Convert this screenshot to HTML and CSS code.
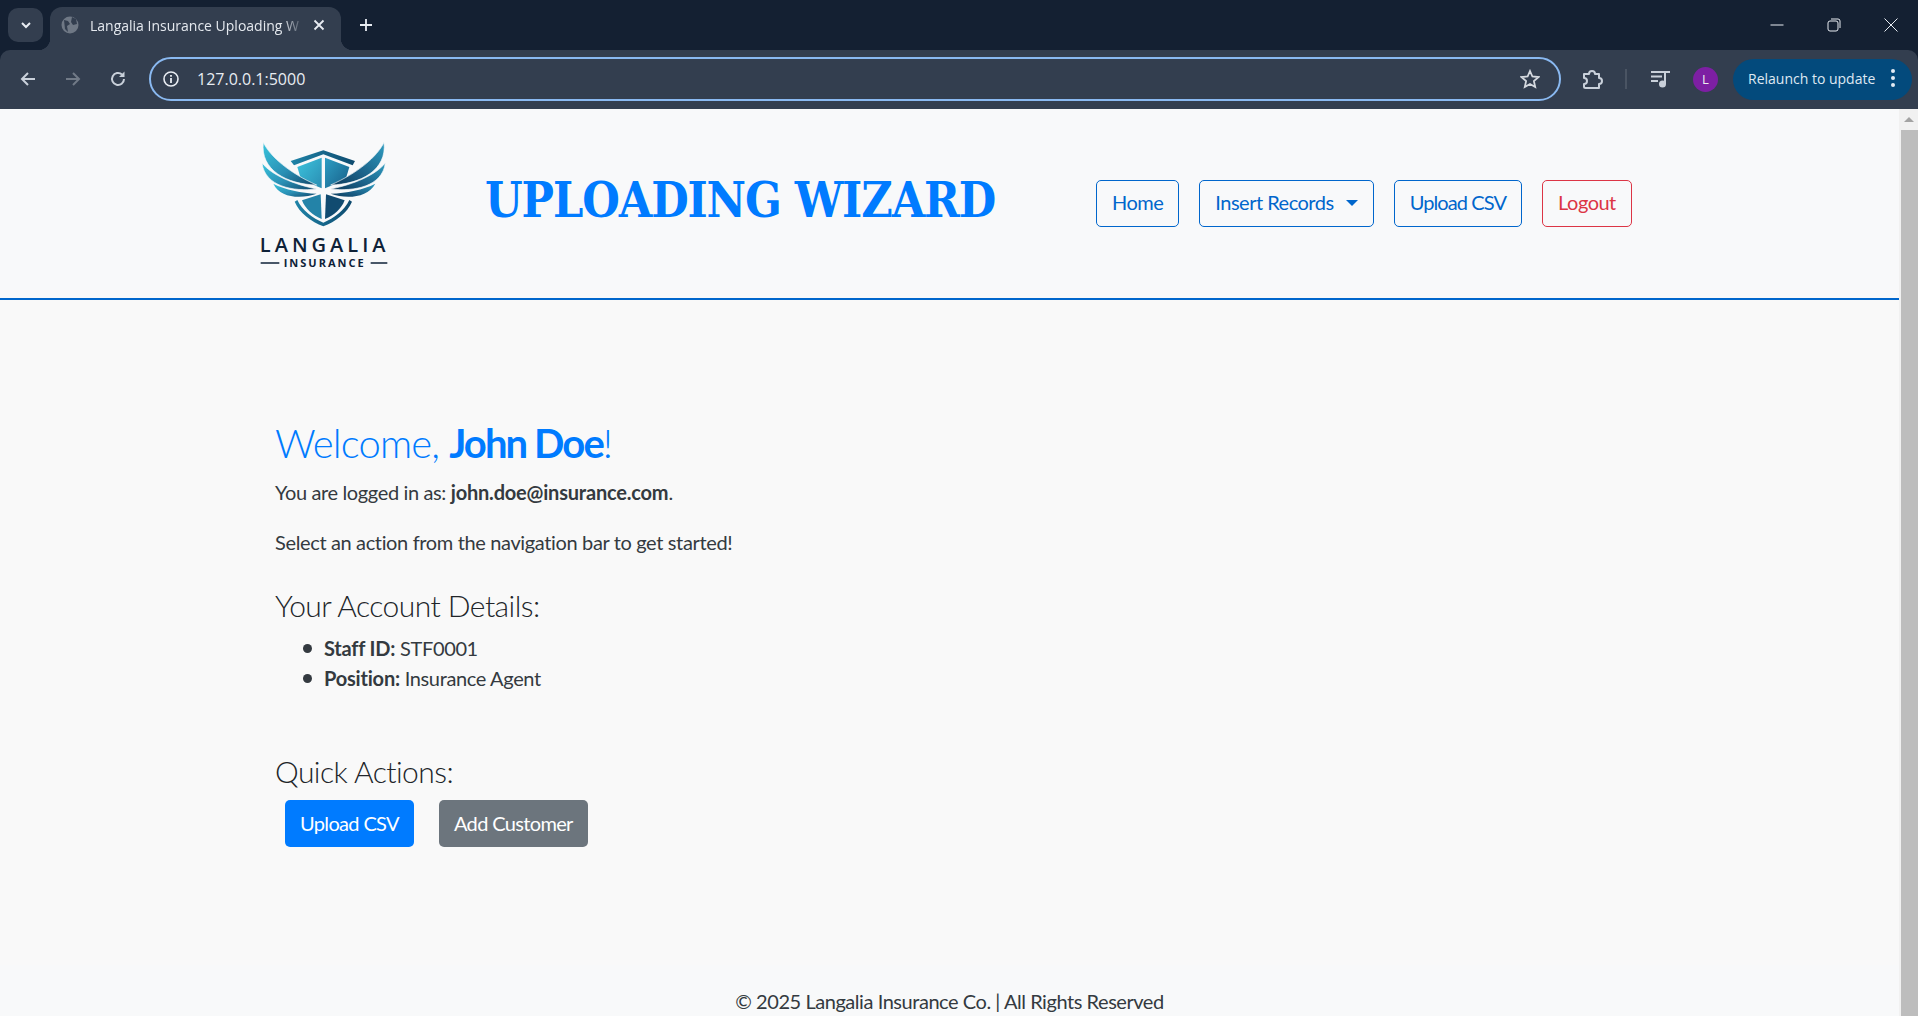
FILE: index.html
```html
<!DOCTYPE html>
<html lang="en">
<head>
    <meta charset="UTF-8">
    <meta name="viewport" content="width=device-width, initial-scale=1.0">
    <title>Langalia Insurance Uploading Wizard</title>
    <link rel="stylesheet" href="styles.css">
</head>
<body>
<div class="browser">
    <div class="tabstrip">
        <div class="tab-search">
            <svg width="14" height="14" viewBox="0 0 14 14"><path d="M3 5l4 4 4-4" fill="none" stroke="#e8ecf2" stroke-width="2"/></svg>
        </div>
        <div class="tab">
            <svg class="favicon" width="18" height="18" viewBox="0 0 18 18"><circle cx="9" cy="9" r="8.5" fill="#6f7885"/><path d="M3 4l4 1 2 3-3 2 1 6-3-3zM11 1l4 2 1 5-4 1-2-3z" fill="#333e4f"/></svg>
            <span class="tab-title">Langalia Insurance Uploading W</span>
            <svg class="tab-close" width="12" height="12" viewBox="0 0 12 12"><path d="M1.5 1.5l9 9M10.5 1.5l-9 9" stroke="#e8ecf2" stroke-width="1.8"/></svg>
        </div>
        <svg class="new-tab" width="14" height="14" viewBox="0 0 14 14"><path d="M7 1v12M1 7h12" stroke="#e8ecf2" stroke-width="1.8"/></svg>
        <div class="window-controls">
            <svg width="14" height="14" viewBox="0 0 14 14"><path d="M0.5 7h13" stroke="#e8ecf2" stroke-width="1"/></svg>
            <svg width="14" height="14" viewBox="0 0 14 14"><rect x="1" y="3" width="10" height="10" rx="2" fill="none" stroke="#e8ecf2"/><path d="M4 1h7a2 2 0 0 1 2 2v7" fill="none" stroke="#e8ecf2"/></svg>
            <svg width="14" height="14" viewBox="0 0 14 14"><path d="M0.5 0.5l13 13M13.5 0.5l-13 13" stroke="#e8ecf2" stroke-width="1"/></svg>
        </div>
    </div>
    <div class="toolbar">
        <svg class="tool" width="18" height="18" viewBox="0 0 18 18"><path d="M16 9H3M9 3L3 9l6 6" fill="none" stroke="#c9d0da" stroke-width="2"/></svg>
        <svg class="tool" width="18" height="18" viewBox="0 0 18 18"><path d="M2 9h13M9 3l6 6-6 6" fill="none" stroke="#717a87" stroke-width="2"/></svg>
        <svg class="tool" width="18" height="18" viewBox="0 0 18 18"><path d="M15 9a6 6 0 1 1-2-4.500" fill="none" stroke="#c9d0da" stroke-width="2"/><path d="M15.500 1.500v5.500H10z" fill="#c9d0da"/></svg>
        <div class="omnibox">
            <svg width="18" height="18" viewBox="0 0 18 18"><circle cx="9" cy="9" r="7" fill="none" stroke="#e8ecf2" stroke-width="1.6"/><path d="M9 8v5M9 5v1.800" stroke="#e8ecf2" stroke-width="1.800"/></svg>
            <span class="url">127.0.0.1:5000</span>
            <svg class="star" width="20" height="20" viewBox="0 0 20 20"><path d="M10 2l2.400 5.500 6 .6-4.500 4 1.300 5.900L10 15l-5.200 3 1.300-5.900-4.500-4 6-.6z" fill="none" stroke="#d5d9df" stroke-width="1.800"/></svg>
        </div>
        <svg class="puzzle" width="22" height="22" viewBox="0 0 22 22"><path d="M2 6h5a3 3 0 0 1 6 0h4v4a3 3 0 0 1 0 6v4H3.500a1.500 1.500 0 0 1-1.500-1.500V16a3 3 0 0 0 0-6z" fill="none" stroke="#c9d0da" stroke-width="2" stroke-linejoin="round"/></svg>
        <span class="divider"></span>
        <svg class="media" width="20" height="18" viewBox="0 0 20 18"><path d="M0 2h13M0 6.500h11M0 11h7" stroke="#c9d0da" stroke-width="2"/><path d="M14 14V2h5" fill="none" stroke="#c9d0da" stroke-width="2"/><circle cx="11.500" cy="14" r="3.500" fill="#c9d0da"/></svg>
        <span class="avatar">L</span>
        <div class="relaunch">
            <span>Relaunch to update</span>
            <svg width="6" height="20" viewBox="0 0 6 20"><circle cx="3" cy="3" r="2" fill="#e3ebf4"/><circle cx="3" cy="10" r="2" fill="#e3ebf4"/><circle cx="3" cy="17" r="2" fill="#e3ebf4"/></svg>
        </div>
    </div>
    <div class="viewport">
        <div class="page">
            <header class="site-header">
                <div class="header-inner">
                    <svg class="logo" width="170" height="150" viewBox="0 0 510 450">
                        <defs>
                            <linearGradient id="wingL" x1="0" y1="0" x2="1" y2="1">
                                <stop offset="0" stop-color="#38c4dc"/>
                                <stop offset="0.55" stop-color="#2a8fb4"/>
                                <stop offset="1" stop-color="#0f4468"/>
                            </linearGradient>
                            <linearGradient id="wingR" x1="1" y1="0" x2="0" y2="1">
                                <stop offset="0" stop-color="#2f9cc0"/>
                                <stop offset="0.6" stop-color="#1a5f86"/>
                                <stop offset="1" stop-color="#0d3a5a"/>
                            </linearGradient>
                            <linearGradient id="panelL" x1="0" y1="0" x2="1" y2="1">
                                <stop offset="0" stop-color="#3cc4de"/>
                                <stop offset="1" stop-color="#2a8db2"/>
                            </linearGradient>
                            <linearGradient id="panelR" x1="0" y1="0" x2="1" y2="1">
                                <stop offset="0" stop-color="#2e9ec4"/>
                                <stop offset="1" stop-color="#175f88"/>
                            </linearGradient>
                            <linearGradient id="outline" x1="0" y1="0" x2="1" y2="0">
                                <stop offset="0" stop-color="#1f84a8"/>
                                <stop offset="1" stop-color="#0e4a6e"/>
                            </linearGradient>
                        </defs>
                        <path d="M250 76L345 108 338 121 250 88 162 121 152 108Z" fill="url(#outline)"/>
                        <path d="M164 230L172 225C186 256 218 280 250 293 282 280 314 256 328 225L336 230C322 264 286 290 250 304 214 290 178 264 164 230Z" fill="url(#outline)"/>
                        <path d="M172 126L245 98V190L212 176 182 160Z" fill="url(#panelL)"/>
                        <path d="M255 98L328 126 318 160 288 176 255 190Z" fill="url(#panelR)"/>
                        <path d="M186 226L242 208 245 282C218 272 196 252 186 226Z" fill="#2383a8"/>
                        <path d="M314 226L258 208 255 282C282 272 304 252 314 226Z" fill="#114b70"/>
                        <path d="M70 52C90 95 150 145 230 180 140 178 60 135 70 52Z" fill="url(#wingL)" stroke="#f8f9fa" stroke-width="2"/>
                        <path d="M66 114C95 150 160 178 230 192 160 200 75 185 66 114Z" fill="url(#wingL)" stroke="#f8f9fa" stroke-width="2"/>
                        <path d="M100 176C135 194 185 204 230 206 185 222 120 220 100 176Z" fill="url(#wingL)"/>
                        <path d="M432 52C412 95 352 145 272 180 362 178 442 135 432 52Z" fill="url(#wingR)" stroke="#f8f9fa" stroke-width="2"/>
                        <path d="M436 114C407 150 342 178 272 192 342 200 427 185 436 114Z" fill="url(#wingR)" stroke="#f8f9fa" stroke-width="2"/>
                        <path d="M406 176C370 194 320 204 272 206 317 222 382 220 406 176Z" fill="url(#wingR)"/>
                        <text class="logo-name" x="254" y="381" text-anchor="middle">LANGALIA</text>
                        <path d="M62 414h56M392 414h50" stroke="#0e2238" stroke-width="5"/>
                        <text class="logo-sub" x="254" y="425" text-anchor="middle">INSURANCE</text>
                    </svg>
                    <h1 class="site-title">UPLOADING WIZARD</h1>
                    <nav class="site-nav">
                        <a class="nav-btn" href="#">Home</a>
                        <a class="nav-btn" href="#">Insert Records<span class="caret"></span></a>
                        <a class="nav-btn nav-btn-tight" href="#">Upload CSV</a>
                        <a class="nav-btn nav-btn-danger" href="#">Logout</a>
                    </nav>
                </div>
            </header>
            <main class="content">
                <h2 class="welcome">Welcome, <strong>John Doe</strong>!</h2>
                <p>You are logged in as: <strong>john.doe@insurance.com</strong>.</p>
                <p>Select an action from the navigation bar to get started!</p>
                <h4 class="section-title account-title">Your Account Details:</h4>
                <ul class="details">
                    <li><span><strong>Staff ID:</strong> STF0001</span></li>
                    <li><span><strong>Position:</strong> Insurance Agent</span></li>
                </ul>
                <h4 class="section-title quick-title">Quick Actions:</h4>
                <div class="actions">
                    <a class="action-btn action-primary" href="#">Upload CSV</a>
                    <a class="action-btn action-secondary" href="#">Add Customer</a>
                </div>
            </main>
            <footer class="site-footer">© 2025 Langalia Insurance Co. | All Rights Reserved</footer>
        </div>
        <div class="scrollbar">
            <div class="scroll-arrow"></div>
            <div class="scroll-thumb"></div>
        </div>
    </div>
</div>
</body>
</html>
```

FILE: styles.css
```css
* {
    box-sizing: border-box;
}
html, body {
    margin: 0;
    height: 100%;
    overflow: hidden;
}
body {
    font-family: Lato, "Open Sans", sans-serif;
    font-size: 20px;
    letter-spacing: -0.36px;
    color: #343a40;
    background: #f9f9f9;
}
strong {
    letter-spacing: -0.2px;
}
.browser {
    display: flex;
    flex-direction: column;
    height: 100vh;
    background: #142032;
}

/* browser chrome */
.tabstrip {
    display: flex;
    align-items: flex-end;
    height: 50px;
    padding-left: 8px;
    font-family: "Open Sans", sans-serif;
    letter-spacing: 0;
}
.tab-search {
    display: flex;
    align-items: center;
    justify-content: center;
    width: 35px;
    height: 34px;
    margin-bottom: 8px;
    background: #333e4f;
    border-radius: 10px;
}
.tab {
    position: relative;
    display: flex;
    align-items: center;
    width: 291px;
    height: 43px;
    margin-left: 7px;
    padding: 0 16px 7px 11px;
    background: #333e4f;
    border-radius: 12px 12px 0 0;
}
.tab::before,
.tab::after {
    content: "";
    position: absolute;
    bottom: 0;
    width: 12px;
    height: 12px;
}
.tab::before {
    left: -12px;
    background: radial-gradient(circle at 0 0, transparent 12px, #333e4f 12.5px);
}
.tab::after {
    right: -12px;
    background: radial-gradient(circle at 100% 0, transparent 12px, #333e4f 12.5px);
}
.tab-title {
    flex: 1;
    margin: 0 9px 0 11px;
    overflow: hidden;
    white-space: nowrap;
    font-size: 14px;
    color: #e4e8ee;
    -webkit-mask-image: linear-gradient(to right, #000 90%, transparent 100%);
}
.new-tab {
    margin: 0 0 18px 18px;
}
.window-controls {
    display: flex;
    gap: 43px;
    margin-left: auto;
    margin-right: 20px;
    margin-bottom: 18px;
}
.toolbar {
    display: flex;
    align-items: center;
    height: 59px;
    padding: 0 0 1px 19px;
    background: #333e4f;
    border-radius: 10px 10px 0 0;
    letter-spacing: 0;
}
.tool {
    flex: none;
    margin-right: 27px;
}
.tool:nth-child(3) {
    margin-right: 22px;
}
.omnibox {
    flex: none;
    display: flex;
    align-items: center;
    width: 1412px;
    height: 44px;
    padding: 0 19px 0 11px;
    border: 2px solid #8ab9f1;
    border-radius: 22px;
}
.url {
    margin-left: 17px;
    font: 16px "Open Sans", sans-serif;
    color: #e8ecf2;
}
.star {
    margin-left: auto;
}
.puzzle {
    flex: none;
    margin-left: 21px;
}
.divider {
    flex: none;
    width: 2px;
    height: 20px;
    margin-left: 21px;
    background: #4a5463;
}
.media {
    flex: none;
    margin-left: 24px;
}
.avatar {
    flex: none;
    display: flex;
    align-items: center;
    justify-content: center;
    width: 25px;
    height: 25px;
    margin-left: 22px;
    border-radius: 50%;
    background: #7d1fa3;
    color: #eee;
    font: 13px "Open Sans", sans-serif;
}
.relaunch {
    flex: none;
    display: flex;
    align-items: center;
    justify-content: space-between;
    width: 179px;
    height: 41px;
    margin-left: 15px;
    padding: 0 16px 2px 15px;
    border-radius: 21px;
    background: #034a7c;
    color: #dfe8f2;
    font: 14px "Open Sans", sans-serif;
    white-space: nowrap;
}

/* page */
.viewport {
    flex: 1;
    display: flex;
    min-height: 0;
    background: #f9f9f9;
}
.page {
    flex: 1;
    min-width: 0;
    display: flex;
    flex-direction: column;
    overflow: hidden;
}
.scrollbar {
    flex: none;
    width: 19px;
    background: #f1f1f1;
    overflow: hidden;
}
.scroll-arrow {
    height: 21px;
    position: relative;
}
.scroll-arrow::after {
    content: "";
    position: absolute;
    left: 5px;
    top: 8px;
    border: 5px solid transparent;
    border-top: 0;
    border-bottom-color: #a3a3a3;
}
.scroll-thumb {
    height: 100%;
    margin-left: 2px;
    background: #bdbdbd;
}
.site-header {
    flex: none;
    height: 191px;
    background: #f8f9fa;
    border-bottom: 2px solid #0066cc;
}
.header-inner {
    display: flex;
    align-items: center;
    height: 100%;
    padding-left: 240px;
}
.logo {
    flex: none;
    margin-top: -7px;
}
.site-title {
    flex: none;
    width: 611px;
    margin: -8px 0 0 75px;
    font-family: "DejaVu Serif Condensed", "DejaVu Serif", serif;
    font-size: 48px;
    font-weight: 700;
    letter-spacing: -1.1px;
    white-space: nowrap;
    color: #007bff;
}
.site-nav {
    display: flex;
    gap: 20px;
    margin-top: -1px;
}
.nav-btn {
    display: block;
    padding: 6px 15px 9px;
    border: 1px solid #0066cc;
    border-radius: 5px;
    color: #0066cc;
    line-height: 30px;
    letter-spacing: -0.5px;
    text-decoration: none;
    white-space: nowrap;
}
.nav-btn-tight {
    letter-spacing: -0.9px;
}
.nav-btn-danger {
    border-color: #dc3545;
    color: #dc3545;
}
.caret {
    display: inline-block;
    margin-left: 12px;
    vertical-align: 4px;
    border-top: 6px solid;
    border-left: 6px solid transparent;
    border-right: 6px solid transparent;
}
.content {
    flex: 1;
    padding: 119px 0 0 275px;
}
.content p {
    margin: 0 0 20px;
    line-height: 30px;
}
.welcome {
    margin: 0 0 10px;
    font-size: 40px;
    font-weight: 300;
    line-height: 48px;
    letter-spacing: -0.85px;
    color: #007bff;
}
.welcome strong {
    font-weight: 700;
    letter-spacing: -1.9px;
}
.section-title {
    margin: 0 0 10px;
    font-size: 30px;
    font-weight: 300;
    line-height: 36px;
    letter-spacing: -0.55px;
    color: #212529;
}
.account-title {
    margin-top: 30px;
}
.details {
    margin: 0 0 20px;
    padding-left: 28px;
    list-style: none;
}
.details li {
    display: flex;
    align-items: center;
    line-height: 30px;
}
.details li::before {
    content: "";
    flex: none;
    width: 9px;
    height: 9px;
    margin-right: 12px;
    border-radius: 50%;
    background: #343a40;
}
.quick-title {
    margin-top: 60px;
}
.actions {
    display: flex;
    gap: 25px;
    padding: 1px 0 0 10px;
}
.action-btn {
    padding: 8px 15px;
    border-radius: 5px;
    line-height: 31px;
    letter-spacing: -0.65px;
    color: #fff;
    text-decoration: none;
}
.action-primary {
    background: #007bff;
}
.action-secondary {
    background: #6c757d;
}
.site-footer {
    flex: none;
    height: 51px;
    padding-top: 21px;
    background: #f8f9fa;
    text-align: center;
    line-height: 30px;
    letter-spacing: -0.45px;
}
.logo-name {
    font-family: "Open Sans", sans-serif;
    font-size: 60px;
    font-weight: 600;
    letter-spacing: 12px;
    fill: #0e2238;
}
.logo-sub {
    font-family: "Open Sans", sans-serif;
    font-size: 33px;
    font-weight: 700;
    letter-spacing: 6px;
    fill: #0e2238;
}
```
